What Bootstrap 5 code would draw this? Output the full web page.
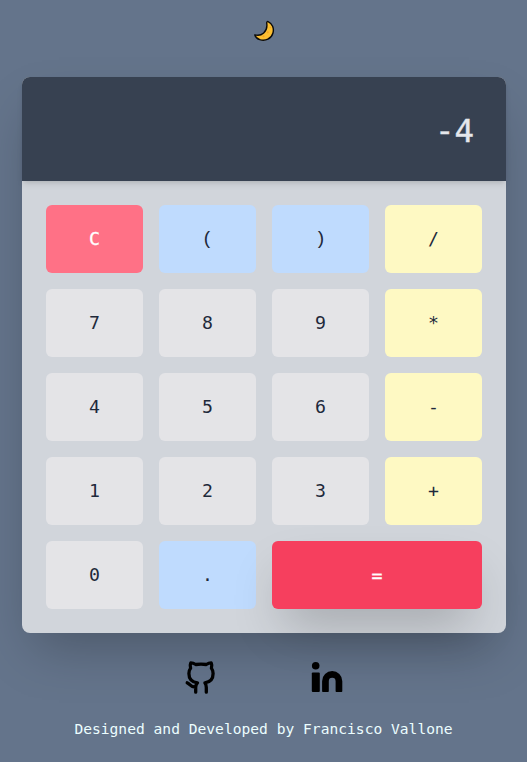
<!DOCTYPE html>
<html lang="en">
<head>
<meta charset="utf-8">
<meta name="viewport" content="width=device-width, initial-scale=1">
<title>Calculator</title>
<link href="https://cdn.jsdelivr.net/npm/bootstrap@5.3.0/dist/css/bootstrap.min.css" rel="stylesheet">
<style>
  body { background: #64748b; font-family: "DejaVu Sans Mono", "Liberation Mono", monospace; min-height: 762px; overflow: hidden; }
  .theme-toggle { height: 77px; padding-top: 19px; }
  .theme-toggle svg, .social svg { display: block; }
  .calc { width: 484px; margin-left: 22px; border-radius: 8px; background: #d1d5db; box-shadow: 0 25px 50px -12px rgba(0,0,0,.25); }
  .display { height: 104px; padding: 5px 32px 0; background: #374151; color: #e5e7eb; font-size: 32.4px; -webkit-text-stroke: .4px #e5e7eb; border-radius: 8px 8px 0 0; box-shadow: 0 4px 6px -1px rgba(0,0,0,.1), 0 2px 4px -2px rgba(0,0,0,.1); }
  .keys { display: grid; grid-template-columns: repeat(4, 97px); grid-auto-rows: 68px; gap: 16px; }
  .key { border: 0; border-radius: 6px; padding: 0; font-size: 18.2px; line-height: 28px; color: #1e293b; background: #e4e4e7; }
  .key-mark { background: #bfdbfe; }
  .key-paren { font-family: "Liberation Mono", monospace; font-size: 19px; }
  .key-op { background: #fef9c3; }
  .key-clear { background: #ff7186; color: #fff; -webkit-text-stroke: .3px #fff; }
  .key-equal { grid-column: span 2; padding-top: 2px; background: #f63f5e; color: #fff; -webkit-text-stroke: .3px #fff; box-shadow: 0 25px 50px -12px rgba(0,0,0,.25); }
  .social { gap: 90px; padding-top: 26px; position: relative; }
  .credit { margin-top: 22px; font-size: 14.62px; line-height: 24px; color: #ecfeff; white-space: nowrap; }
</style>
<script src="https://cdn.jsdelivr.net/npm/bootstrap@5.3.0/dist/js/bootstrap.bundle.min.js"></script>
</head>
<body>
<header class="theme-toggle d-flex justify-content-center">
  <svg width="24" height="24" viewBox="0 0 24 24" role="img" aria-label="Dark mode">
    <path d="M16.1 2.6C20.2 4.6 22.4 9.2 20.9 14.2C19.2 19.8 13.6 22.4 7.8 20.7C5.4 19.9 3.6 18.2 2.8 15.9C6.2 16.8 9.3 16.2 11.7 14C14.5 11.4 15.4 8.2 14.7 4.2C14.6 3 15.2 2.3 16.1 2.6Z" fill="#fcbf32" stroke="#0b0b0b" stroke-width="1.4" stroke-linejoin="round"/>
    <circle cx="15.8" cy="13.2" r="1" fill="#f5a623"/><circle cx="11.5" cy="17.3" r="1.1" fill="#f5a623"/><circle cx="18.4" cy="8.5" r=".8" fill="#f5a623"/>
  </svg>
</header>
<main class="calc">
  <div class="display d-flex align-items-center justify-content-end">-4</div>
  <div class="keys p-4">
    <button class="key key-clear">C</button>
    <button class="key key-mark key-paren">(</button>
    <button class="key key-mark key-paren">)</button>
    <button class="key key-op">/</button>
    <button class="key">7</button>
    <button class="key">8</button>
    <button class="key">9</button>
    <button class="key key-op">*</button>
    <button class="key">4</button>
    <button class="key">5</button>
    <button class="key">6</button>
    <button class="key key-op">-</button>
    <button class="key">1</button>
    <button class="key">2</button>
    <button class="key">3</button>
    <button class="key key-op">+</button>
    <button class="key">0</button>
    <button class="key key-mark">.</button>
    <button class="key key-equal">=</button>
  </div>
</main>
<footer>
  <div class="social d-flex justify-content-center">
    <svg width="36" height="36" viewBox="0 0 36 36" role="img" aria-label="GitHub">
      <path d="M12.7 33.2V28.5C12.7 26.5 13.2 25 14.5 23.8C9.2 23.2 5.9 20.1 5.9 14.5C5.9 12.3 6.4 10.6 7.6 9.2C7 7.4 7 5.6 7.8 3.9C9.6 3.9 11.2 4.5 12.7 5.5C16.2 4.9 19.8 4.9 23.3 5.5C24.8 4.5 26.4 3.9 28.2 3.9C29 5.6 29 7.4 28.4 9.2C29.6 10.6 30.1 12.3 30.1 14.5C30.1 20.1 26.8 23.2 21.9 23.8C23 25 23.3 26.5 23.3 28.5V33.2M4.2 23.8C7 24.5 7.2 28.3 12.6 28" fill="none" stroke="#000" stroke-width="3.3" stroke-linecap="round" stroke-linejoin="round"/>
    </svg>
    <svg width="36" height="36" viewBox="0 0 36 36" role="img" aria-label="LinkedIn">
      <circle cx="6.7" cy="6.7" r="3.8"/>
      <rect x="2.8" y="13.6" width="8" height="19.4" rx="1"/>
      <path d="M14.2 33C13.5 33 13.1 32.6 13.1 31.9V22.2A10.1 10.1 0 0 1 33.3 22.2V31.9C33.3 32.6 32.9 33 32.2 33H27.7C27 33 26.6 32.6 26.6 31.9V22.2A3.4 3.4 0 0 0 19.8 22.2V31.9C19.8 32.6 19.4 33 18.7 33Z"/>
    </svg>
  </div>
  <p class="credit text-center mb-0">Designed and Developed by Francisco Vallone</p>
</footer>
</body>
</html>
